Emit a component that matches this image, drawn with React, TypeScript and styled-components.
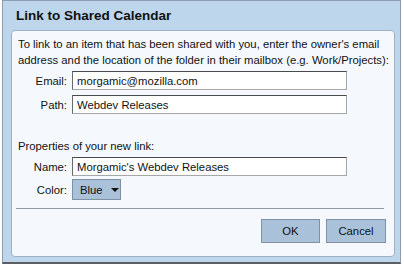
import React from "react";
import styled, { createGlobalStyle } from "styled-components";

const GlobalStyle = createGlobalStyle`
  html, body {
    margin: 0;
    padding: 0;
    background: #ffffff;
  }
  body {
    font-family: "Liberation Sans", Arial, sans-serif;
  }
`;

const Dialog = styled.div`
  box-sizing: border-box;
  margin-left: 2px;
  width: 399px;
  height: 264px;
  background: #bed6ec;
  border: 1px solid #8d9db0;
  border-bottom: 2px solid #5a5f66;
  display: flex;
  flex-direction: column;
`;

const Title = styled.div`
  height: 29px;
  padding-left: 13px;
  font-size: 13.5px;
  font-weight: bold;
  color: #111;
  line-height: 29px;
`;

const Panel = styled.div`
  flex: 1;
  margin: 0 5px 5px 8px;
  background: #f5f9fe;
  border: 1px solid #9fb0c2;
  border-radius: 4px;
  padding: 5px 6px 0 6px;
  font-size: 11.3px;
  color: #111;
  display: flex;
  flex-direction: column;
`;

const Intro = styled.p`
  margin: 0;
  line-height: 16px;
  white-space: nowrap;
`;

const Field = styled.div<{ $top: number }>`
  display: flex;
  align-items: center;
  gap: 5px;
  margin-top: ${(p) => p.$top}px;
`;

const Label = styled.label`
  width: 49px;
  text-align: right;
`;

const TextBox = styled.input`
  box-sizing: border-box;
  width: 275px;
  height: 19px;
  padding: 0 4px;
  background: #ffffff;
  border: 1px solid #a7a7a7;
  border-top-color: #4a4a4a;
  border-left-color: #6a6a6a;
  font-family: inherit;
  font-size: 11.3px;
  color: #111;
  outline: none;
`;

const SectionHeading = styled.div`
  margin-top: 24px;
  line-height: 16px;
`;

const Dropdown = styled.button`
  box-sizing: border-box;
  height: 21px;
  width: 49px;
  padding: 0 6px 0 7px;
  display: flex;
  align-items: center;
  gap: 8px;
  background: #a9c1d9;
  border: 1px solid #7f91a5;
  font-family: inherit;
  font-size: 11.3px;
  color: #111;
`;

const Caret = styled.span`
  width: 0;
  height: 0;
  border-left: 4px solid transparent;
  border-right: 4px solid transparent;
  border-top: 4px solid #111;
`;

const Divider = styled.hr`
  margin: 8px 4px 0 -2px;
  border: 0;
  border-top: 1px solid #8e9aa6;
`;

const Buttons = styled.div`
  display: flex;
  justify-content: flex-end;
  gap: 6px;
  margin-top: 10px;
  padding-right: 2px;
`;

const ActionButton = styled.button<{ $w: number }>`
  box-sizing: border-box;
  width: ${(p) => p.$w}px;
  height: 24px;
  background: #a9c1d9;
  border: 1px solid #7f91a5;
  font-family: inherit;
  font-size: 11.3px;
  color: #111;
`;

export default function App() {
  return (
    <>
      <GlobalStyle />
      <Dialog>
        <Title>Link to Shared Calendar</Title>
        <Panel>
          <Intro>
            To link to an item that has been shared with you, enter the owner's email
            <br />
            address and the location of the folder in their mailbox (e.g. Work/Projects):
          </Intro>
          <Field $top={3}>
            <Label>Email:</Label>
            <TextBox defaultValue="morgamic@mozilla.com" />
          </Field>
          <Field $top={5}>
            <Label>Path:</Label>
            <TextBox defaultValue="Webdev Releases" />
          </Field>
          <SectionHeading>Properties of your new link:</SectionHeading>
          <Field $top={3}>
            <Label>Name:</Label>
            <TextBox defaultValue="Morgamic's Webdev Releases" />
          </Field>
          <Field $top={3}>
            <Label>Color:</Label>
            <Dropdown>
              Blue
              <Caret />
            </Dropdown>
          </Field>
          <Divider />
          <Buttons>
            <ActionButton $w={59}>OK</ActionButton>
            <ActionButton $w={60}>Cancel</ActionButton>
          </Buttons>
        </Panel>
      </Dialog>
    </>
  );
}
